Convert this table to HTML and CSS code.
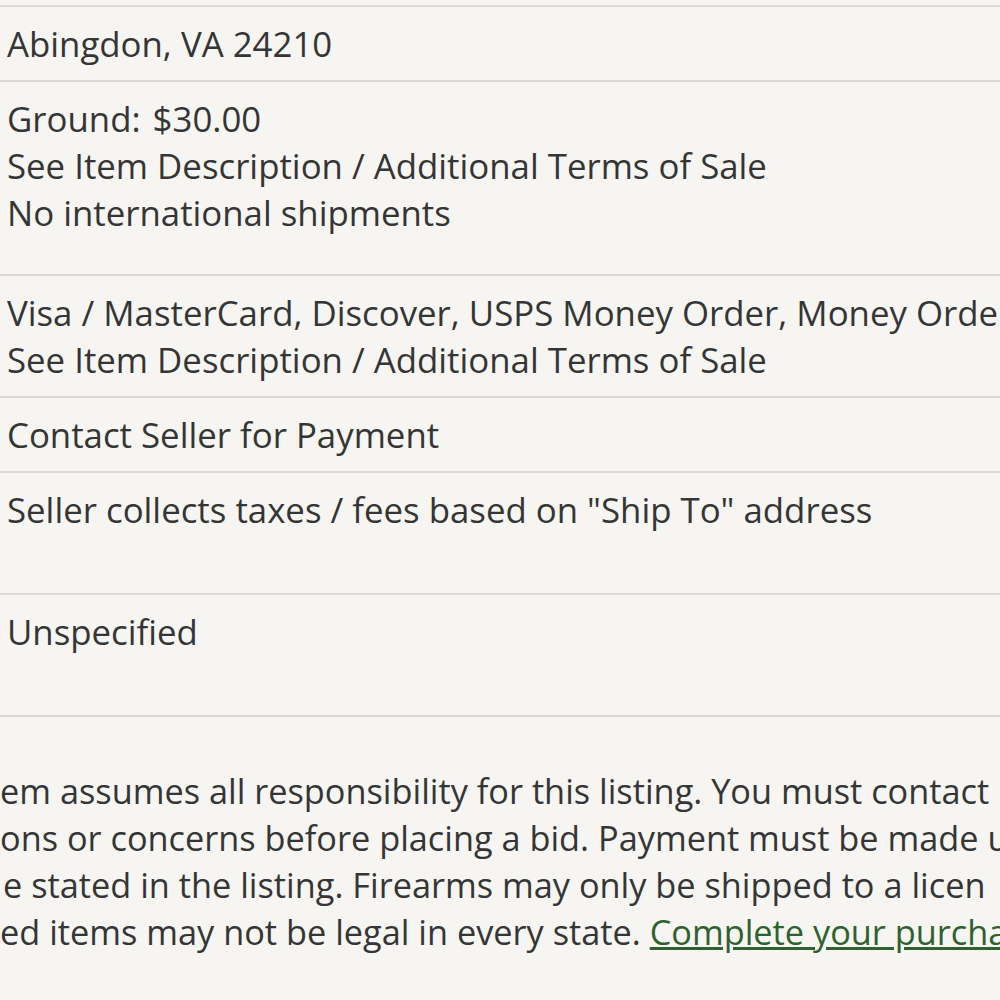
FILE: index.html
```html
<!DOCTYPE html>
<html>
<head>
    <title>Listing Details</title>
    <link rel="stylesheet" href="styles.css">
</head>
<body>
    <div class="details">
        <div class="detail-row">
            <div class="detail-value">Abingdon, VA 24210</div>
        </div>
        <div class="detail-row row-tall">
            <div class="detail-value">
                <div><span class="ship-method">Ground:</span> $30.00</div>
                <div>See Item Description / Additional Terms of Sale</div>
                <div>No international shipments</div>
            </div>
        </div>
        <div class="detail-row">
            <div class="detail-value">
                <div>Visa / MasterCard, Discover, USPS Money Order, Money Orde</div>
                <div>See Item Description / Additional Terms of Sale</div>
            </div>
        </div>
        <div class="detail-row">
            <div class="detail-value">Contact Seller for Payment</div>
        </div>
        <div class="detail-row row-double">
            <div class="detail-value">Seller collects taxes / fees based on "Ship To" address</div>
        </div>
        <div class="detail-row row-double">
            <div class="detail-value">Unspecified</div>
        </div>
    </div>

    <div class="disclaimer">
        <div class="disclaimer-line">em assumes all responsibility for this listing. You must contact</div>
        <div class="disclaimer-line">ons or concerns before placing a bid. Payment must be made u</div>
        <div class="disclaimer-line line-shift">e stated in the listing. Firearms may only be shipped to a licen</div>
        <div class="disclaimer-line">ed items may not be legal in every state. <a href="#">Complete your purcha</a></div>
    </div>
</body>
</html>
```

FILE: styles.css
```css
body {
    font-family: "Open Sans", Arial, sans-serif;
    font-size: 34.8px;
    line-height: 47px;
    color: #353535;
    background: #f6f5f2;
    margin: 0;
    padding: 0;
    overflow: hidden;
}

.details {
    padding-top: 5px;
    border-bottom: 2px solid #dad8d4;
}

.detail-row {
    border-top: 2px solid #dad8d4;
    padding: 13px 0 13px 7px;
    white-space: nowrap;
    overflow: hidden;
}

.row-tall {
    padding-bottom: 38px;
}

.row-double {
    padding-bottom: 60px;
}

.ship-method {
    margin-right: 3px;
}

.disclaimer {
    padding-top: 50px;
    font-size: 34.3px;
    white-space: nowrap;
    overflow: hidden;
}

.line-shift {
    padding-left: 3px;
}

.disclaimer a {
    color: #2f612f;
    text-decoration: underline;
}
```
